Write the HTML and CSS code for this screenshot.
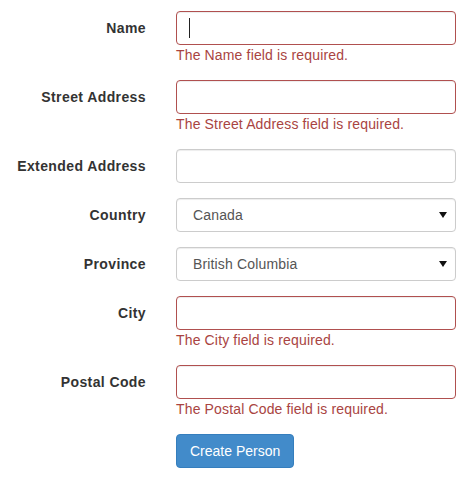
FILE: index.html
```html
<!DOCTYPE html>
<html>
<head>
<meta charset="utf-8">
<link rel="stylesheet" href="styles.css">
</head>
<body>
<form class="form">
  <div class="group">
    <label class="label">Name</label>
    <div class="field">
      <div class="input-wrap">
        <input class="control error" type="text">
        <span class="caret"></span>
      </div>
      <span class="help">The Name field is required.</span>
    </div>
  </div>
  <div class="group">
    <label class="label">Street Address</label>
    <div class="field">
      <input class="control error" type="text">
      <span class="help">The Street Address field is required.</span>
    </div>
  </div>
  <div class="group">
    <label class="label">Extended Address</label>
    <div class="field">
      <input class="control" type="text">
    </div>
  </div>
  <div class="group">
    <label class="label">Country</label>
    <div class="field">
      <div class="select">
        <span class="select-text">Canada</span>
        <svg class="arrow" width="8" height="6" viewBox="0 0 8 6"><path d="M0 0H8L4 6Z" fill="#111"/></svg>
      </div>
    </div>
  </div>
  <div class="group">
    <label class="label">Province</label>
    <div class="field">
      <div class="select">
        <span class="select-text">British Columbia</span>
        <svg class="arrow" width="8" height="6" viewBox="0 0 8 6"><path d="M0 0H8L4 6Z" fill="#111"/></svg>
      </div>
    </div>
  </div>
  <div class="group">
    <label class="label">City</label>
    <div class="field">
      <input class="control error" type="text">
      <span class="help">The City field is required.</span>
    </div>
  </div>
  <div class="group">
    <label class="label">Postal Code</label>
    <div class="field">
      <input class="control error" type="text">
      <span class="help">The Postal Code field is required.</span>
    </div>
  </div>
  <div class="group">
    <span></span>
    <div class="field">
      <button class="btn" type="button">Create Person</button>
    </div>
  </div>
</form>
</body>
</html>
```

FILE: styles.css
```css
* { box-sizing: border-box; }
html, body { margin: 0; background: #fff; }
body {
  font-family: "Liberation Sans", Arial, sans-serif;
  font-size: 14px;
  line-height: 20px;
  color: #333;
}
.form {
  padding-top: 11px;
}
.group {
  display: grid;
  grid-template-columns: 146px 280px;
  column-gap: 30px;
  margin-bottom: 15px;
}
.label {
  text-align: right;
  font-weight: bold;
  padding-top: 7px;
  color: #333;
  letter-spacing: 0.4px;
}
.field {
  display: flex;
  flex-direction: column;
  align-items: flex-start;
}
.input-wrap {
  position: relative;
  width: 100%;
}
.control {
  display: block;
  width: 100%;
  height: 34px;
  padding: 6px 12px;
  font: inherit;
  color: #555;
  background: #fff;
  border: 1px solid #ccc;
  border-radius: 4px;
  box-shadow: inset 0 1px 1px rgba(0,0,0,0.075);
  outline: none;
}
.control.error {
  border-color: #b0504f;
}
.caret {
  position: absolute;
  left: 13px;
  top: 7px;
  width: 1px;
  height: 20px;
  background: #222;
}
.help {
  color: #a94442;
  line-height: 20px;
  letter-spacing: 0.15px;
}
.select {
  width: 100%;
  height: 34px;
  display: flex;
  align-items: center;
  justify-content: space-between;
  padding: 0 8px 0 16px;
  border: 1px solid #ccc;
  border-radius: 4px;
  box-shadow: inset 0 1px 1px rgba(0,0,0,0.075);
  color: #555;
  letter-spacing: 0.15px;
}
.arrow { display: block; }
.btn {
  font: inherit;
  color: #fff;
  background: #428bca;
  border: 1px solid #357ebd;
  border-radius: 4px;
  padding: 6px 13px;
  height: 34px;
  line-height: 20px;
  cursor: pointer;
}
```
